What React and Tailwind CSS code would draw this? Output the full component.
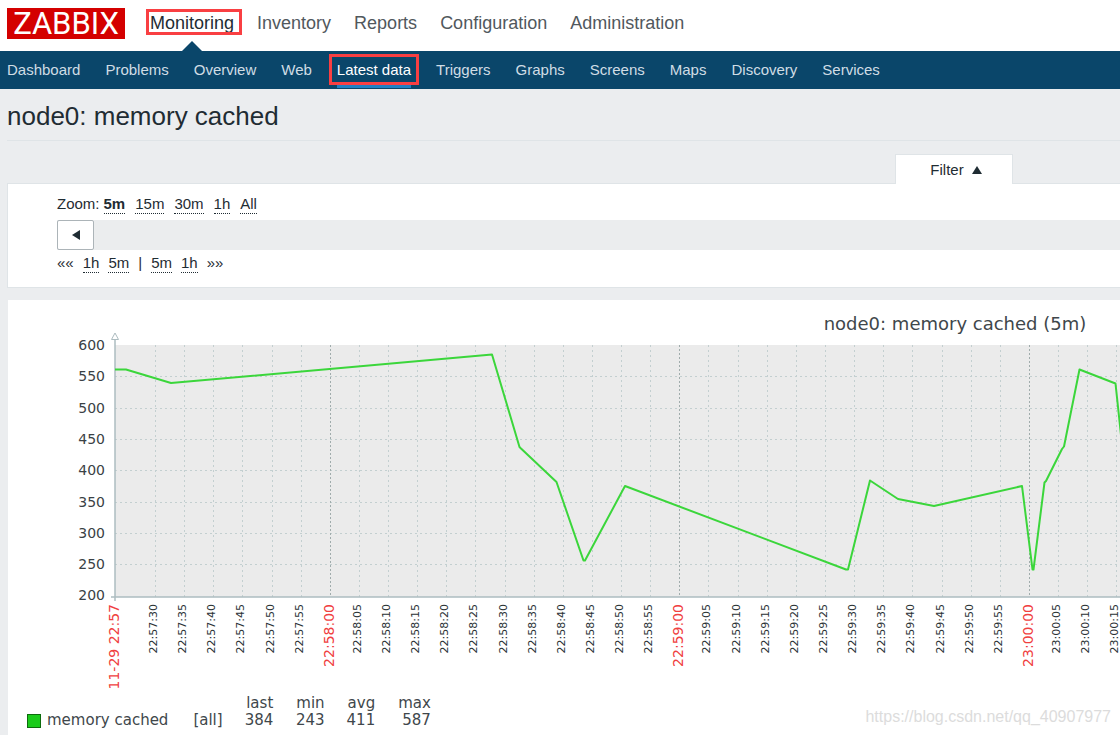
import { useState } from "react";

const mainMenu = ["Monitoring", "Inventory", "Reports", "Configuration", "Administration"];

const subMenu = [
  "Dashboard",
  "Problems",
  "Overview",
  "Web",
  "Latest data",
  "Triggers",
  "Graphs",
  "Screens",
  "Maps",
  "Discovery",
  "Services",
];

const zoomLevels = ["5m", "15m", "30m", "1h", "All"];

const stats = [
  { label: "last", value: 384 },
  { label: "min", value: 243 },
  { label: "avg", value: 411 },
  { label: "max", value: 587 },
];

// plot geometry inside the graph svg
const LEFT = 107;
const TOP = 45;
const BOTTOM = 297;
const FIRST_TICK = 146;

const yLabels = [600, 550, 500, 450, 400, 350, 300, 250, 200];

// one tick every 5 seconds, starting with 22:57:30
const ticks = Array.from({ length: 34 }, (_, i) => {
  const seconds = 22 * 3600 + 57 * 60 + 30 + i * 5;
  const pad = (n) => String(n).padStart(2, "0");
  return {
    x: Math.round(FIRST_TICK + i * 29.13),
    label: [Math.floor(seconds / 3600), Math.floor(seconds / 60) % 60, seconds % 60].map(pad).join(":"),
    major: seconds % 60 === 0,
  };
});

const points =
  "107,69.5 118,69.5 163,83 484,54.5 511.5,147 513,148.5 548.5,182 575.5,260.5 577,260.5 617,186 " +
  "838,269.5 840,269.5 862,180.5 890,199 926,206 1014,186 1024.5,269.5 1025.5,269.5 1036.5,182.5 " +
  "1038,181 1054,149 1056,146.5 1071.5,69.5 1107.5,83.5 1113,135 1127,210";

function Header() {
  return (
    <header>
      <div className="flex h-[51px] items-start bg-white pl-[7px]">
        <a
          href="#home"
          className="mt-2 flex h-[31px] w-[118px] items-center justify-center bg-[#d40000] font-['Roboto'] text-[31px] leading-[31px] text-white"
        >
          ZABBIX
        </a>
        <nav className="ml-[25px] flex h-[51px] gap-[23px] text-[18px] leading-[46px]">
          {mainMenu.map((item) =>
            item === "Monitoring" ? (
              <a key={item} href="#monitoring" className="relative text-[#1f2c33]">
                {item}
                <span className="absolute -left-1 -right-2 top-[9px] h-[26px] border-3 border-[#f93f42]" />
                <span className="absolute bottom-0 left-1/2 -ml-[10px] border-x-10 border-b-10 border-x-transparent border-b-[#0a466a]" />
              </a>
            ) : (
              <a key={item} href={`#${item.toLowerCase()}`} className="text-[#51585d]">
                {item}
              </a>
            )
          )}
        </nav>
      </div>

      <nav className="flex h-[38px] gap-[25px] whitespace-nowrap bg-[#0a466a] pl-[7px] text-[15px] leading-[38px] text-[#d0dde5]">
        {subMenu.map((item) =>
          item === "Latest data" ? (
            <a key={item} href="#latest" className="relative text-white">
              {item}
              <span className="absolute inset-x-0 bottom-px h-[3px] bg-[#1f80c4]" />
              <span className="absolute -inset-x-2 top-[3px] h-[31px] border-3 border-[#f93f42]" />
            </a>
          ) : (
            <a key={item} href={`#${item.toLowerCase()}`}>
              {item}
            </a>
          )
        )}
      </nav>
    </header>
  );
}

function ShiftLink({ children }) {
  return (
    <a href="#shift" className="border-b border-dotted border-[#1f2c33]">
      {children}
    </a>
  );
}

function TimeFilter() {
  const [zoom, setZoom] = useState("5m");

  return (
    <section className="pl-[7px] pt-[13px]">
      <div className="flex justify-end pr-[107px]">
        <button className="relative -mb-px flex h-[30px] w-[118px] items-center justify-center gap-2 border border-b-0 border-[#dfe4e7] bg-white pl-1 pt-px">
          Filter
          <svg className="h-2 w-[10px]" viewBox="0 0 10 8" aria-hidden="true">
            <path d="M5 0 10 8H0Z" fill="#1f2c33" />
          </svg>
        </button>
      </div>

      <div className="border border-r-0 border-[#dfe4e7] bg-white pb-[14px] pl-[49px] pt-[11px]">
        <div className="flex h-[25px] items-start gap-[10px] leading-[18px]">
          <span className="-mr-[6px]">Zoom:</span>
          {zoomLevels.map((level) => (
            <button
              key={level}
              onClick={() => setZoom(level)}
              className={`border-b border-dotted border-[#1f2c33] ${zoom === level ? "font-bold" : ""}`}
            >
              {level}
            </button>
          ))}
        </div>

        <div className="flex h-[30px] bg-[#ebedee]">
          <button
            aria-label="Earlier"
            className="flex w-[37px] items-center justify-center rounded-xs border border-[#acb4b8] bg-white"
          >
            <svg className="h-[10px] w-2" viewBox="0 0 8 10" aria-hidden="true">
              <path d="M8 0V10L0 5Z" fill="#1f2c33" />
            </svg>
          </button>
        </div>

        <div className="mt-1 flex items-start gap-[9px] leading-[18px]">
          <span>««</span>
          <ShiftLink>1h</ShiftLink>
          <ShiftLink>5m</ShiftLink>
          <span>|</span>
          <ShiftLink>5m</ShiftLink>
          <ShiftLink>1h</ShiftLink>
          <span>»»</span>
        </div>
      </div>
    </section>
  );
}

function Graph() {
  return (
    <svg
      className="block h-[395px] w-full font-['DejaVu_Sans']"
      role="img"
      aria-label="node0: memory cached"
    >
      <text x="947" y="30" textAnchor="middle" fill="#40474b" className="text-[18px]">
        node0: memory cached (5m)
      </text>

      <rect x={LEFT} y={TOP} width="100%" height={BOTTOM - TOP} fill="#ebebeb" />

      {yLabels.map((value, i) => {
        const y = Math.round(TOP + i * 31.3);
        return (
          <g key={value}>
            {i > 0 && i < 8 && (
              <line x1={LEFT} x2="100%" y1={y + 0.5} y2={y + 0.5} stroke="#c3cfd0" strokeDasharray="2 3" />
            )}
            <text x="97" y={y + 5} textAnchor="end" fill="#3a4145" className="text-[14px]">
              {value}
            </text>
          </g>
        );
      })}

      {ticks.map(({ x, label, major }) => (
        <g key={label}>
          <line
            x1={x + 1.5}
            x2={x + 1.5}
            y1={TOP}
            y2={BOTTOM}
            stroke={major ? "#a0acac" : "#c3cfd0"}
            strokeDasharray={major ? "2 2" : "2 3"}
          />
          <text
            transform={`translate(${major ? x + 5 : x + 3} 304) rotate(-90)`}
            textAnchor="end"
            fill={major ? "#f04040" : "#2b3236"}
            className={major ? "text-[14px]" : "text-[11px]"}
          >
            {label}
          </text>
        </g>
      ))}

      <text transform="translate(111 304) rotate(-90)" textAnchor="end" fill="#f04040" className="text-[14px]">
        11-29 22:57
      </text>

      {/* axes */}
      <path d="M107 40V301" stroke="#adbcc0" strokeWidth="1.5" />
      <line x1="103" x2="100%" y1="297" y2="297" stroke="#adbcc0" strokeWidth="1.5" />
      <path d="M107 33 110.5 39.5H103.5Z" fill="#fff" stroke="#adbcc0" />

      <polyline points={points} fill="none" stroke="#3bd63b" strokeWidth="2" strokeLinejoin="round" />
    </svg>
  );
}

function Legend() {
  return (
    <table className="ml-[19px] font-['DejaVu_Sans'] text-[15px] leading-[17px] text-[#40474b]">
      <thead>
        <tr>
          <td />
          <td />
          {stats.map((s) => (
            <th key={s.label} scope="col" className="p-0 pl-[23px] text-right font-normal">
              {s.label}
            </th>
          ))}
        </tr>
      </thead>
      <tbody>
        <tr>
          <th scope="row" className="p-0 text-left font-normal">
            <span className="flex items-center gap-[6px]">
              <span className="size-[14px] border border-[#0d6b0d] bg-[#1bcb1b]" />
              memory cached
            </span>
          </th>
          <td className="p-0 pl-[25px]">[all]</td>
          {stats.map((s) => (
            <td key={s.label} className="p-0 pl-[22px] text-right">
              {s.value}
            </td>
          ))}
        </tr>
      </tbody>
    </table>
  );
}

export default function App() {
  return (
    <div className="relative flex min-h-screen flex-col overflow-hidden bg-[#ebedef] font-['Liberation_Sans',sans-serif] text-[15px] text-[#1f2c33]">
      <Header />

      <h1 className="ml-[7px] border-b border-[#dfe4e7] pb-2 pt-3 text-[26px] leading-[31px]">
        node0: memory cached
      </h1>

      <TimeFilter />

      <main className="ml-2 mt-3 flex-1 bg-white">
        <Graph />
        <Legend />
      </main>

      <span className="absolute bottom-2 right-[9px] text-[16px] leading-5 text-[#dcdcdc]">
        https://blog.csdn.net/qq_40907977
      </span>
    </div>
  );
}
